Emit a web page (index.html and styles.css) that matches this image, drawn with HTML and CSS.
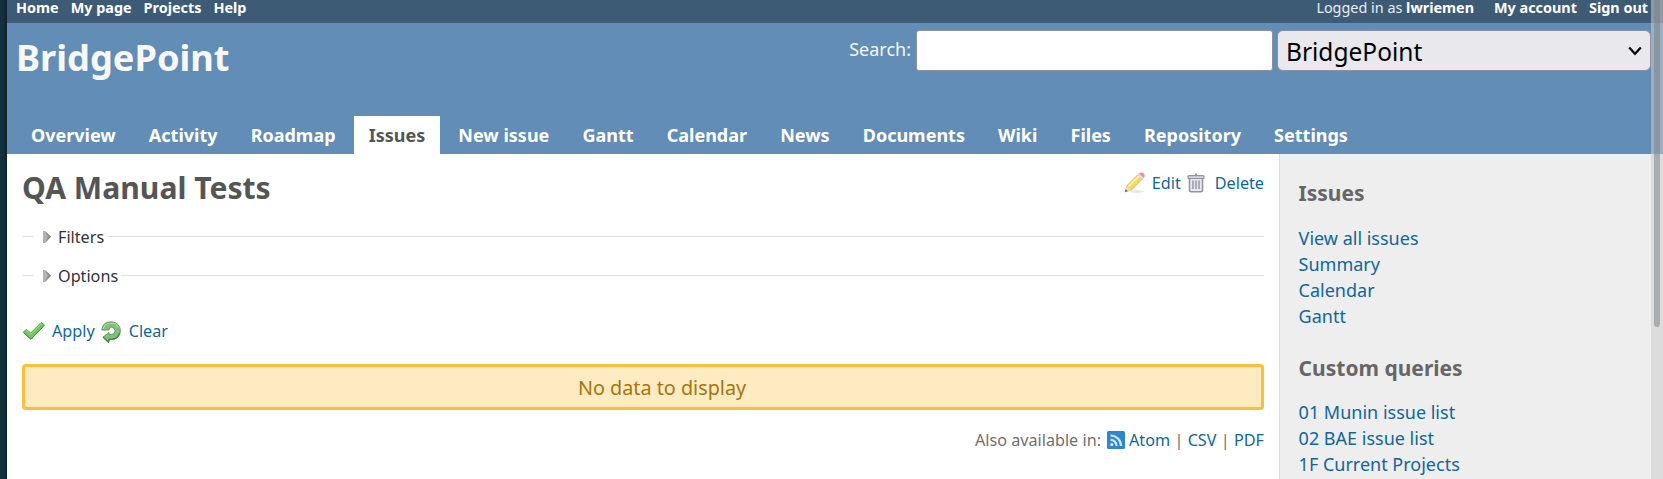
FILE: index.html
```html
<!DOCTYPE html>
<html lang="en">
<head>
<meta charset="utf-8">
<title>QA Manual Tests - BridgePoint</title>
<link rel="stylesheet" href="styles.css">
</head>
<body>
<div class="page">
  <div class="top-menu">
    <nav class="top-links"><a>Home</a><a>My page</a><a>Projects</a><a>Help</a></nav>
    <div class="account"><span class="logged">Logged in as <b>lwriemen</b></span><a>My account</a><a>Sign out</a></div>
  </div>
  <header class="header">
    <div class="header-row">
      <h1>BridgePoint</h1>
      <div class="quick-search">
        <label class="search-label" for="q">Search:</label>
        <input id="q" class="search-input" type="text">
        <div class="project-select"><span>BridgePoint</span>
          <svg width="14" height="10" viewBox="0 0 14 10"><path d="M1.2 1.5 L7 7.8 L12.8 1.5" fill="none" stroke="#000" stroke-width="2.2"/></svg>
        </div>
      </div>
    </div>
    <nav class="tabs"><a>Overview</a><a>Activity</a><a>Roadmap</a><a class="selected">Issues</a><a>New issue</a><a>Gantt</a><a>Calendar</a><a>News</a><a>Documents</a><a>Wiki</a><a>Files</a><a>Repository</a><a>Settings</a></nav>
  </header>
  <div class="main">
    <main class="content">
      <div class="title-row">
        <h2>QA Manual Tests</h2>
        <div class="contextual">
          <svg class="icon-edit" width="24" height="24" viewBox="0 0 24 24">
            <ellipse cx="14" cy="20.5" rx="7" ry="1.4" fill="#e9e9e9"/>
            <path d="M2 21 L4 14.5 L15 3.5 L19.5 8 L8.5 19Z" fill="#f5d768" stroke="#d3a548" stroke-width=".7"/>
            <path d="M5.5 15.5 L16 5" stroke="#fff0a8" stroke-width="1.8"/>
            <path d="M2 21 L4 14.8 L8.2 19Z" fill="#edd9b5"/>
            <path d="M2 21 L2.8 18.3 L4.7 20.2Z" fill="#555"/>
            <path d="M14.3 4 L16 2.4 L20.7 7 L19 8.7Z" fill="#d9dbe2"/>
            <path d="M16 2.4 Q18 .5 20.5 2.2 Q22.6 4.8 20.7 7Z" fill="#f18b90"/>
          </svg><a class="edit-link">Edit</a>
          <svg class="icon-delete" width="18" height="20" viewBox="0 0 18 20">
            <path d="M9 .5V3" stroke="#9292a0" stroke-width="2"/>
            <rect x="1" y="2.6" width="16" height="3" rx="1" fill="#d6d6df" stroke="#9292a0" stroke-width="1.2"/>
            <path d="M2.5 6V17.5Q2.5 18.7 4 18.7H14Q15.5 18.7 15.5 17.5V6" fill="#e7e7ed" stroke="#9292a0" stroke-width="1.5"/>
            <path d="M6 7.5V16M9 7.5V16M12 7.5V16" stroke="#9292a0" stroke-width="1.4"/>
          </svg><a>Delete</a>
        </div>
      </div>
      <div class="fieldset"><svg width="8" height="12" viewBox="0 0 8 12"><path d="M0 0H2L8 5.7L2 12H0Z" fill="#b3b3b3"/><path d="M2 0L8 5.7L2 12L5 5.7Z" fill="#8e8e8e"/></svg><span>Filters</span></div>
      <div class="fieldset"><svg width="8" height="12" viewBox="0 0 8 12"><path d="M0 0H2L8 5.7L2 12H0Z" fill="#b3b3b3"/><path d="M2 0L8 5.7L2 12L5 5.7Z" fill="#8e8e8e"/></svg><span>Options</span></div>
      <div class="buttons">
        <svg class="icon-apply" width="24" height="20" viewBox="0 0 24 20"><path d="M1.2 11.3 L4.2 8.3 L8.7 12 L19.2 1.5 L22.5 4 L9 18.3Z" fill="#73c75f" stroke="#5aaa50" stroke-width="1"/><path d="M2 12 L9 18.2 L22.3 4.3" fill="none" stroke="#3f9141" stroke-width="1"/><path d="M4.2 9.3 L8.8 13.2 L19.2 2.8" fill="none" stroke="#98dc84" stroke-width="1"/></svg><a class="apply-link">Apply</a>
        <svg class="icon-clear" width="20" height="22" viewBox="0 0 20 22">
          <path d="M.8 9 Q1.5 .8 10.5 .8 A8.8 8.8 0 0 1 10.5 18.6 H8.2 L7.5 21.3 L2 16 L8 11.6 V13.4 H10.5 A3.5 3.5 0 0 0 10.5 6.3 Q8.3 6.5 7.8 9Z" fill="#84bd7d" stroke="#5d9f5a" stroke-width="1"/>
          <path d="M2 16 L7.5 21.3 L8.2 18.1 H10.5 Q17 18 18.7 12" fill="none" stroke="#438d43" stroke-width="1.4"/>
          <path d="M2.2 8 Q3.5 2.3 10.5 2.2 Q15.5 2.3 17.4 6.5" fill="none" stroke="#a5d29d" stroke-width="1.3"/>
        </svg><a>Clear</a>
      </div>
      <p class="nodata">No data to display</p>
      <p class="formats">Also available in:<svg width="18" height="18" viewBox="0 0 18 18"><rect width="18" height="18" rx="1.5" fill="#2d87c8"/><g fill="none" stroke="#cfe4f5" stroke-width="2.2"><path d="M3.5 8.8A6 6 0 0 1 9.5 15"/><path d="M3.5 4.5A10.5 10.5 0 0 1 14 15"/></g><circle cx="4.8" cy="13.5" r="1.6" fill="#e1effa"/></svg><a>Atom</a><i>|</i><a>CSV</a><i>|</i><a>PDF</a></p>
    </main>
    <aside class="sidebar">
      <h3>Issues</h3>
      <ul><li><a>View all issues</a></li><li><a>Summary</a></li><li><a>Calendar</a></li><li><a>Gantt</a></li></ul>
      <h3 class="queries">Custom queries</h3>
      <ul><li><a>01 Munin issue list</a></li><li><a>02 BAE issue list</a></li><li><a>1F Current Projects</a></li></ul>
    </aside>
  </div>
</div>
<div class="scrollbar"><div class="thumb"></div></div>
</body>
</html>
```
FILE: styles.css
```css
* { box-sizing: border-box; }
html { overflow: hidden; }
body { margin: 0; height: 479px; overflow: hidden; background: linear-gradient(to right, #15303f 0, #122e3b 4px, #0b1f2a 7px); font-family: "Noto Sans", sans-serif; font-size: 18px; color: #333; }
h1, h2, h3, p, ul { margin: 0; padding: 0; }
ul { list-style: none; }
svg { display: block; flex: none; }
.page { margin-left: 7px; height: 479px; background: #fff; display: flex; flex-direction: column; }
.top-menu { height: 23px; background: #3e5b76; color: #fff; display: flex; justify-content: space-between; padding: 0 15px 0 9px; font-size: 14.4px; line-height: 15px; }
.top-links, .account { display: flex; gap: 12px; white-space: nowrap; }
.top-menu a { font-weight: 700; }
.logged { color: #e8eef3; margin-right: 8px; }
.logged b { color: #fff; }
.header { height: 131px; background: #628db6; color: #f8f8f8; display: flex; flex-direction: column; justify-content: space-between; }
.header-row { display: flex; justify-content: space-between; padding: 7px 12px 0 9px; }
h1 { font-size: 36.2px; line-height: 49px; padding-top: 3px; }
.quick-search { display: flex; height: 41px; }
.search-label { line-height: 38px; margin-right: 5px; }
.search-input { width: 357px; height: 41px; border: 1px solid #8f8f9d; border-radius: 3px; background: #fff; margin: 0 4px 0 0; padding: 0 8px; font: inherit; }
.project-select { width: 374px; height: 41px; border: 1px solid #8f8f9d; border-radius: 6px; background: #e9e9ed; color: #000; font-size: 24.5px; display: flex; align-items: center; justify-content: space-between; padding: 1px 8px 0 8px; }
.tabs { display: flex; gap: 3.1px; padding-left: 9px; }
.tabs a { font-weight: 700; color: #fff; line-height: 38px; padding: 0 15px; white-space: nowrap; }
.tabs .selected { background: #fff; color: #555; }
.main { flex: 1; display: flex; min-height: 0; }
.content { width: 1272px; padding: 0 15px; display: flex; flex-direction: column; font-size: 16.2px; }
a { color: #169; }
.top-menu a { color: #fff; }
.title-row { display: flex; justify-content: space-between; height: 71px; }
h2 { font-size: 30.1px; line-height: 40px; padding-top: 14px; color: #555; }
.contextual { display: flex; align-items: flex-start; padding-top: 17px; line-height: 24px; }
.icon-edit { margin-right: 5px; }
.edit-link { margin-right: 6px; }
.icon-delete { margin: 2px 10px 0 0; }
.fieldset { display: flex; align-items: center; height: 24px; margin-bottom: 15px; line-height: 24px; }
.fieldset::before { content: ""; width: 12px; height: 1px; background: #e2e2e2; margin-bottom: 1px; }
.fieldset::after { content: ""; flex: 1; height: 1px; background: #e2e2e2; margin: 0 0 1px 3px; }
.fieldset svg { margin: 0 7px 1px 9px; }
.buttons { display: flex; align-items: center; height: 24px; line-height: 24px; margin-top: 16px; }
.icon-apply { margin-right: 6px; }
.apply-link { margin-right: 6px; }
.icon-clear { margin: 1px 8px 0 0; }
.nodata { height: 46px; line-height: 42px; margin-top: 21px; padding-left: 38px; border: 3px solid #fdbf3b; border-radius: 4px; background: #ffebc1; color: #a6750c; text-align: center; font-size: 19.8px; }
.formats { display: flex; align-items: center; justify-content: flex-end; height: 24px; line-height: 24px; margin-top: 18px; color: #707070; }
.formats svg { margin: 0 4px 0 6px; }
.formats i { font-style: normal; margin: 0 4.3px; }
.sidebar { flex: 1; background: #eee; border-left: 1px solid #ddd; padding: 26px 0 0 18.6px; }
h3 { font-size: 21px; line-height: 26px; color: #666; }
.sidebar li { height: 26px; line-height: 26px; }
.sidebar ul { margin-top: 19px; }
.queries { margin-top: 26px; }
.queries + ul { margin-top: 18px; }
.scrollbar { position: absolute; top: 0; right: 0; width: 12px; height: 479px; background: rgba(205, 205, 205, .55); }
.thumb { width: 6px; height: 327px; margin-left: 3px; border-radius: 0 0 3px 3px; background: rgba(120, 125, 130, .5); }
```
